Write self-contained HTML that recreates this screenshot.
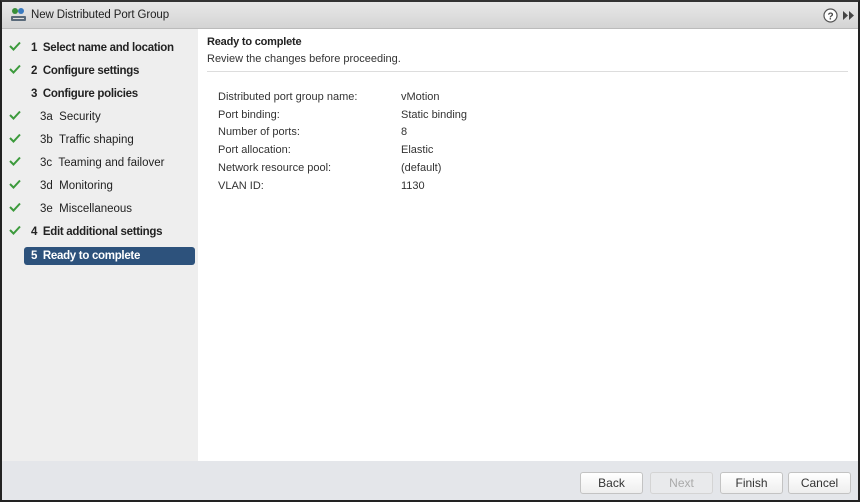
<!DOCTYPE html>
<html><head><meta charset="utf-8"><style>
*{margin:0;padding:0;box-sizing:border-box}
body{width:860px;height:502px;overflow:hidden;font-family:"Liberation Sans",Arial,sans-serif;font-size:12px;color:#333;background:#fff}
.win{position:absolute;left:0;top:0;width:860px;height:502px;border:2px solid #222;border-top-color:#333;background:#fff}
.title{position:absolute;left:0;top:0;width:856px;height:27px;background:linear-gradient(#e8e8e8,#d4d4d4);border-bottom:1px solid #bbb}
.title .t{position:absolute;left:29px;top:7px;font-size:11.5px;letter-spacing:-0.1px;color:#222}
.left{position:absolute;left:0;top:27px;width:196px;height:432px;background:#eee}
.step{position:absolute;left:0;height:18px;width:196px;font-size:11.5px;color:#222;white-space:nowrap}
.step span{position:absolute;top:3px}
.step span.b{font-weight:bold;letter-spacing:-0.3px}
.chk{position:absolute;left:7px;top:2px}
.sel{position:absolute;left:22px;top:218px;width:171px;height:18px;background:#2d527c;border-radius:3px}
.content{position:absolute;left:196px;top:27px;right:0;height:432px;background:#fff}
.h{position:absolute;left:9px;top:7px;font-weight:bold;font-size:11px;letter-spacing:-0.2px;color:#222}
.sub{position:absolute;left:9px;top:24px;font-size:11px;color:#333}
.hr{position:absolute;left:9px;right:10px;top:42px;border-top:1px solid #ddd}
.row{position:absolute;left:20px;font-size:11px;color:#333}
.row b{font-weight:normal;position:absolute;left:183px;white-space:nowrap}
.foot{position:absolute;left:0;top:459px;width:856px;height:39px;background:#e4e6ea}
.btn{position:absolute;top:11px;height:22px;width:63px;border:1px solid #c3c3c3;border-radius:3px;background:linear-gradient(#fff,#eee);text-align:center;line-height:20px;font-size:12px;color:#333}
</style></head><body><div class="win">
<div class="title">
<svg style="position:absolute;left:8px;top:5px" width="17" height="16" viewBox="0 0 17 16"><circle cx="5" cy="4" r="3" fill="#3a8f3a"/><circle cx="11" cy="4" r="3" fill="#3a7ac0"/><rect x="1" y="9" width="15" height="5" rx="1" fill="#5a6a7a"/><rect x="3" y="11" width="11" height="1" fill="#ddd"/></svg>
<div class="t">New Distributed Port Group</div>
<svg style="position:absolute;left:821px;top:6px" width="15" height="15" viewBox="0 0 15 15"><circle cx="7.5" cy="7.5" r="6.5" fill="#fff" stroke="#555" stroke-width="1.2"/><text x="7.5" y="11.5" text-anchor="middle" font-size="10" font-weight="bold" font-family="Liberation Sans" fill="#444">?</text></svg>
<svg style="position:absolute;left:841px;top:9px" width="12" height="9" viewBox="0 0 12 9"><path d="M0 0L5 4.5L0 9Z M6 0L11 4.5L6 9Z" fill="#444"/></svg>
</div>
<div class="left">
<div class="step" style="top:10px"><svg class="chk" width="12" height="10"><path d="M1 5L4.5 8.5L11 1.5" stroke="#3c9a3c" stroke-width="2" fill="none"/></svg><span class="b" style="left:29px">1&nbsp; Select name and location</span></div>
<div class="step" style="top:33px"><svg class="chk" width="12" height="10"><path d="M1 5L4.5 8.5L11 1.5" stroke="#3c9a3c" stroke-width="2" fill="none"/></svg><span class="b" style="left:29px">2&nbsp; Configure settings</span></div>
<div class="step" style="top:56px"><span class="b" style="left:29px">3&nbsp; Configure policies</span></div>
<div class="step" style="top:79px"><svg class="chk" width="12" height="10"><path d="M1 5L4.5 8.5L11 1.5" stroke="#3c9a3c" stroke-width="2" fill="none"/></svg><span style="left:38px">3a&nbsp; Security</span></div>
<div class="step" style="top:102px"><svg class="chk" width="12" height="10"><path d="M1 5L4.5 8.5L11 1.5" stroke="#3c9a3c" stroke-width="2" fill="none"/></svg><span style="left:38px">3b&nbsp; Traffic shaping</span></div>
<div class="step" style="top:125px"><svg class="chk" width="12" height="10"><path d="M1 5L4.5 8.5L11 1.5" stroke="#3c9a3c" stroke-width="2" fill="none"/></svg><span style="left:38px">3c&nbsp; Teaming and failover</span></div>
<div class="step" style="top:148px"><svg class="chk" width="12" height="10"><path d="M1 5L4.5 8.5L11 1.5" stroke="#3c9a3c" stroke-width="2" fill="none"/></svg><span style="left:38px">3d&nbsp; Monitoring</span></div>
<div class="step" style="top:171px"><svg class="chk" width="12" height="10"><path d="M1 5L4.5 8.5L11 1.5" stroke="#3c9a3c" stroke-width="2" fill="none"/></svg><span style="left:38px">3e&nbsp; Miscellaneous</span></div>
<div class="step" style="top:194px"><svg class="chk" width="12" height="10"><path d="M1 5L4.5 8.5L11 1.5" stroke="#3c9a3c" stroke-width="2" fill="none"/></svg><span class="b" style="left:29px">4&nbsp; Edit additional settings</span></div>
<div class="sel"></div>
<div class="step" style="top:218px"><span class="b" style="left:29px;color:#fff">5&nbsp; Ready to complete</span></div>
</div>
<div class="content">
<div class="h">Ready to complete</div>
<div class="sub">Review the changes before proceeding.</div>
<div class="hr"></div>
<div class="row" style="top:62px">Distributed port group name:<b>vMotion</b></div>
<div class="row" style="top:80px">Port binding:<b>Static binding</b></div>
<div class="row" style="top:97px">Number of ports:<b>8</b></div>
<div class="row" style="top:115px">Port allocation:<b>Elastic</b></div>
<div class="row" style="top:133px">Network resource pool:<b>(default)</b></div>
<div class="row" style="top:151px">VLAN ID:<b>1130</b></div>
</div>
<div class="foot">
<div class="btn" style="left:578px">Back</div>
<div class="btn" style="left:648px;color:#aaa;background:#e9eaec;border-color:#d4d4d4">Next</div>
<div class="btn" style="left:718px">Finish</div>
<div class="btn" style="left:786px">Cancel</div>
</div>
</div></body></html>
